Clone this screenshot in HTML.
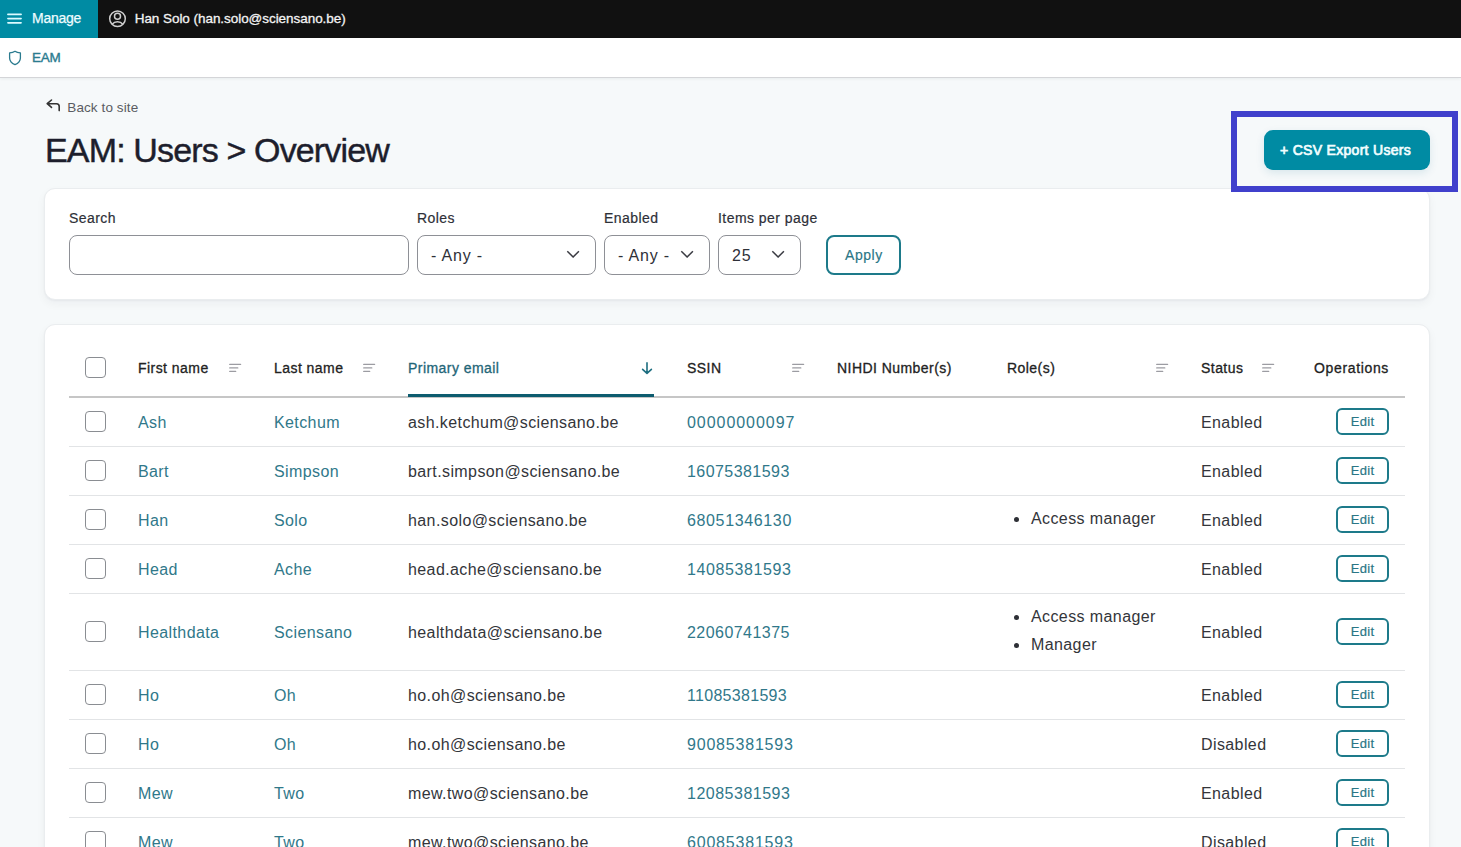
<!DOCTYPE html>
<html><head><meta charset="utf-8">
<style>
*{box-sizing:border-box;margin:0;padding:0}
html,body{width:1461px;height:847px;overflow:hidden}
body{background:#f6f9fa;font-family:"Liberation Sans",sans-serif;color:#232429;position:relative}
.abs{position:absolute;white-space:nowrap}
#topbar{position:absolute;left:0;top:0;width:1461px;height:38px;background:#111111}
#manage{position:absolute;left:0;top:0;width:98px;height:38px;background:#008ba3}
#subbar{position:absolute;left:0;top:38px;width:1461px;height:40px;background:#fff;border-bottom:1px solid #d4d5d8;box-shadow:0 1px 3px rgba(20,30,40,0.06)}
.card{position:absolute;left:44px;width:1386px;background:#fff;border:1px solid #eaedef;border-radius:11px;box-shadow:0 4px 10px rgba(20,30,40,0.045),0 1px 2px rgba(20,30,40,0.04)}
.lbl{font-size:14px;color:#2e3038;letter-spacing:0.45px;-webkit-text-stroke:0.2px #2e3038}
.sel{position:absolute;top:235px;height:40px;border:1px solid #8e9096;border-radius:8px;background:#fff}
.sel span{position:absolute;font-size:16px;color:#2e3038;letter-spacing:0.8px;top:11px;line-height:18px}
.chev{position:absolute;top:13px}
.th{position:absolute;font-size:14px;color:#222;white-space:nowrap;letter-spacing:0.45px;-webkit-text-stroke:0.3px currentColor}
.cb{position:absolute;width:21px;height:21px;border:1px solid #8a8d92;border-radius:4px;background:#fff}
.td{position:absolute;font-size:16px;white-space:nowrap;letter-spacing:0.4px;color:#33353a}
.lnk{color:#30788a}
.rowline{position:absolute;left:69px;width:1336px;height:1px;background:#e2e4e6}
.edit{position:absolute;left:1336px;width:53px;height:27px;border:2px solid #1d7a8a;border-radius:6px;color:#2a7686;font-size:13px;text-align:center;line-height:23px;letter-spacing:0.3px;-webkit-text-stroke:0.2px #2a7686}
.sorti{position:absolute}
</style></head>
<body>
<div id="topbar"></div>
<div id="manage"></div>
<!-- hamburger -->
<svg class="abs" style="left:6px;top:12px" width="18" height="13" viewBox="0 0 18 13"><path d="M1.9 2.4H15.1M1.9 6.55H15.1M1.9 10.85H15.1" stroke="#dcfbff" stroke-width="1.65" stroke-linecap="round"/></svg>
<div class="abs" style="left:32px;top:10px;font-size:14px;color:#eefcff;line-height:17px;letter-spacing:-0.25px;-webkit-text-stroke:0.25px #eefcff">Manage</div>
<!-- user icon -->
<svg class="abs" style="left:108px;top:9px" width="19" height="19" viewBox="0 0 19 19"><circle cx="9.5" cy="9.7" r="7.8" fill="none" stroke="#cfcfcf" stroke-width="1.5"/><circle cx="9.5" cy="7.3" r="3" fill="none" stroke="#cfcfcf" stroke-width="1.5"/><path d="M4.2 15.3C5.5 13.6 7.3 12.8 9.5 12.8S13.5 13.6 14.8 15.3" fill="none" stroke="#cfcfcf" stroke-width="1.5"/></svg>
<div class="abs" style="left:134.7px;top:9.6px;font-size:13.5px;color:#f3f3f3;line-height:17px;letter-spacing:-0.05px;-webkit-text-stroke:0.3px #f3f3f3">Han Solo (han.solo@sciensano.be)</div>

<div id="subbar"></div>
<svg class="abs" style="left:8px;top:50px" width="14" height="16" viewBox="0 0 14 16"><path d="M7 1.3C5.6 2.3 3.6 2.8 1.6 2.9V8C1.6 11.2 4 13.4 7 14.7C10 13.4 12.4 11.2 12.4 8V2.9C10.4 2.8 8.4 2.3 7 1.3Z" fill="none" stroke="#2b7b8f" stroke-width="1.3" stroke-linejoin="round"/></svg>
<div class="abs" style="left:32px;top:48.5px;font-size:13.5px;color:#2b7b8f;line-height:17px;letter-spacing:-0.2px;-webkit-text-stroke:0.35px #2b7b8f">EAM</div>

<!-- back to site -->
<svg class="abs" style="left:44.5px;top:98px" width="16" height="15" viewBox="0 0 16 15"><path d="M6.5 2L2.2 5.7L6.5 9.4M2.5 5.7H11.5Q14.2 5.7 14.2 8.4V12.6" fill="none" stroke="#333" stroke-width="1.6" stroke-linecap="round" stroke-linejoin="round"/></svg>
<div class="abs" style="left:67.3px;top:100px;font-size:13.5px;color:#5a5c62;line-height:16px;letter-spacing:0.1px">Back to site</div>

<div class="abs" style="left:45px;top:130px;font-size:34px;color:#1d1e2c;line-height:40px;letter-spacing:-0.85px;-webkit-text-stroke:0.45px #1d1e2c">EAM: Users &gt; Overview</div>

<!-- highlight box + button -->
<div class="abs" style="left:1231px;top:111px;width:227px;height:81px;border:6px solid #4040cc;z-index:5"></div>
<div class="abs" style="left:1264px;top:130px;width:166px;height:40px;background:#008ba3;border-radius:9px;box-shadow:0 3px 8px rgba(0,100,130,0.12)"></div>
<div class="abs" style="left:1280px;top:142px;font-size:14px;color:#f2feff;line-height:16px;letter-spacing:0.3px;-webkit-text-stroke:0.7px #f2feff">+ CSV Export Users</div>

<!-- filter card -->
<div class="card" style="top:188px;height:112px"></div>
<div class="abs lbl" style="left:69px;top:210px;line-height:16px">Search</div>
<div class="abs lbl" style="left:417px;top:210px;line-height:16px">Roles</div>
<div class="abs lbl" style="left:604px;top:210px;line-height:16px">Enabled</div>
<div class="abs lbl" style="left:718px;top:210px;line-height:16px">Items per page</div>
<div class="sel" style="left:69px;width:340px"></div>
<div class="sel" style="left:417px;width:179px"><span style="left:13px">- Any -</span><svg class="chev" style="left:148px" width="15" height="9" viewBox="0 0 15 9"><path d="M1.3 2.2L7.1 8L12.9 2.2" fill="none" stroke="#3a3b42" stroke-width="1.5"/></svg></div>
<div class="sel" style="left:604px;width:106px"><span style="left:13px">- Any -</span><svg class="chev" style="left:75px" width="15" height="9" viewBox="0 0 15 9"><path d="M1.3 2.2L7.1 8L12.9 2.2" fill="none" stroke="#3a3b42" stroke-width="1.5"/></svg></div>
<div class="sel" style="left:718px;width:83px"><span style="left:13px">25</span><svg class="chev" style="left:52px" width="15" height="9" viewBox="0 0 15 9"><path d="M1.3 2.2L7.1 8L12.9 2.2" fill="none" stroke="#3a3b42" stroke-width="1.5"/></svg></div>
<div class="abs" style="left:826px;top:235px;width:75px;height:40px;border:2px solid #1d7a8a;border-radius:8px;background:#fff"></div>
<div class="abs" style="left:845px;top:247px;font-size:14px;color:#2a7686;line-height:16px;letter-spacing:0.55px;-webkit-text-stroke:0.15px #2a7686">Apply</div>

<!-- table card -->
<div class="card" style="top:324px;height:560px"></div>
<div id="table"><div class="cb" style="left:85px;top:357px"></div>
<div class="th" style="left:138px;top:360px;line-height:16px">First name</div>
<div class="th" style="left:274px;top:360px;line-height:16px">Last name</div>
<div class="th" style="left:408px;top:360px;line-height:16px;color:#1f6678">Primary email</div>
<div class="th" style="left:687px;top:360px;line-height:16px">SSIN</div>
<div class="th" style="left:837px;top:360px;line-height:16px">NIHDI Number(s)</div>
<div class="th" style="left:1007px;top:360px;line-height:16px">Role(s)</div>
<div class="th" style="left:1201px;top:360px;line-height:16px">Status</div>
<div class="th" style="left:1314px;top:360px;line-height:16px;letter-spacing:0.65px">Operations</div>
<svg class="sorti" style="left:229px;top:363px" width="14" height="10" viewBox="0 0 14 10"><path d="M0.7 1.4H11.6M0.7 4.95H8.8M0.7 8.45H6.7" stroke="#9c9ca2" stroke-width="1.25" stroke-linecap="round"/></svg>
<svg class="sorti" style="left:363px;top:363px" width="14" height="10" viewBox="0 0 14 10"><path d="M0.7 1.4H11.6M0.7 4.95H8.8M0.7 8.45H6.7" stroke="#9c9ca2" stroke-width="1.25" stroke-linecap="round"/></svg>
<svg class="sorti" style="left:792px;top:363px" width="14" height="10" viewBox="0 0 14 10"><path d="M0.7 1.4H11.6M0.7 4.95H8.8M0.7 8.45H6.7" stroke="#9c9ca2" stroke-width="1.25" stroke-linecap="round"/></svg>
<svg class="sorti" style="left:1156px;top:363px" width="14" height="10" viewBox="0 0 14 10"><path d="M0.7 1.4H11.6M0.7 4.95H8.8M0.7 8.45H6.7" stroke="#9c9ca2" stroke-width="1.25" stroke-linecap="round"/></svg>
<svg class="sorti" style="left:1262px;top:363px" width="14" height="10" viewBox="0 0 14 10"><path d="M0.7 1.4H11.6M0.7 4.95H8.8M0.7 8.45H6.7" stroke="#9c9ca2" stroke-width="1.25" stroke-linecap="round"/></svg>
<svg class="sorti" style="left:640px;top:360px" width="14" height="15" viewBox="0 0 14 15"><path d="M7 2.9V13M2.6 9.3L7 13.4L11.4 9.3" fill="none" stroke="#1d6e80" stroke-width="1.6" stroke-linecap="round" stroke-linejoin="round"/></svg>
<div class="abs" style="left:69px;top:396px;width:1336px;height:2px;background:#c6c6c6"></div>
<div class="abs" style="left:408px;top:394px;width:246px;height:3px;background:#0d5c6f"></div>
<div class="rowline" style="top:446px"></div>
<div class="cb" style="left:85px;top:411px"></div>
<div class="td lnk" style="left:138px;top:414px;line-height:18px">Ash</div>
<div class="td lnk" style="left:274px;top:414px;line-height:18px">Ketchum</div>
<div class="td" style="left:408px;top:414px;line-height:18px">ash.ketchum@sciensano.be</div>
<div class="td lnk" style="left:687px;top:414px;line-height:18px;letter-spacing:0.95px">00000000097</div>
<div class="td" style="left:1201px;top:414px;line-height:18px">Enabled</div>
<div class="edit" style="top:408px">Edit</div>
<div class="rowline" style="top:495px"></div>
<div class="cb" style="left:85px;top:460px"></div>
<div class="td lnk" style="left:138px;top:463px;line-height:18px">Bart</div>
<div class="td lnk" style="left:274px;top:463px;line-height:18px">Simpson</div>
<div class="td" style="left:408px;top:463px;line-height:18px">bart.simpson@sciensano.be</div>
<div class="td lnk" style="left:687px;top:463px;line-height:18px;letter-spacing:0.44px">16075381593</div>
<div class="td" style="left:1201px;top:463px;line-height:18px">Enabled</div>
<div class="edit" style="top:457px">Edit</div>
<div class="rowline" style="top:544px"></div>
<div class="cb" style="left:85px;top:509px"></div>
<div class="td lnk" style="left:138px;top:512px;line-height:18px">Han</div>
<div class="td lnk" style="left:274px;top:512px;line-height:18px">Solo</div>
<div class="td" style="left:408px;top:512px;line-height:18px">han.solo@sciensano.be</div>
<div class="td lnk" style="left:687px;top:512px;line-height:18px;letter-spacing:0.64px">68051346130</div>
<div class="td" style="left:1201px;top:512px;line-height:18px">Enabled</div>
<div class="edit" style="top:506px">Edit</div>
<div class="abs" style="left:1014px;top:517px;width:5px;height:5px;border-radius:50%;background:#2e3036"></div>
<div class="td" style="left:1031px;top:510px;line-height:18px">Access manager</div>
<div class="rowline" style="top:593px"></div>
<div class="cb" style="left:85px;top:558px"></div>
<div class="td lnk" style="left:138px;top:561px;line-height:18px">Head</div>
<div class="td lnk" style="left:274px;top:561px;line-height:18px">Ache</div>
<div class="td" style="left:408px;top:561px;line-height:18px">head.ache@sciensano.be</div>
<div class="td lnk" style="left:687px;top:561px;line-height:18px;letter-spacing:0.60px">14085381593</div>
<div class="td" style="left:1201px;top:561px;line-height:18px">Enabled</div>
<div class="edit" style="top:555px">Edit</div>
<div class="rowline" style="top:670px"></div>
<div class="cb" style="left:85px;top:621px"></div>
<div class="td lnk" style="left:138px;top:624px;line-height:18px">Healthdata</div>
<div class="td lnk" style="left:274px;top:624px;line-height:18px">Sciensano</div>
<div class="td" style="left:408px;top:624px;line-height:18px">healthdata@sciensano.be</div>
<div class="td lnk" style="left:687px;top:624px;line-height:18px;letter-spacing:0.45px">22060741375</div>
<div class="td" style="left:1201px;top:624px;line-height:18px">Enabled</div>
<div class="edit" style="top:618px">Edit</div>
<div class="abs" style="left:1014px;top:615px;width:5px;height:5px;border-radius:50%;background:#2e3036"></div>
<div class="td" style="left:1031px;top:608px;line-height:18px">Access manager</div>
<div class="abs" style="left:1014px;top:643px;width:5px;height:5px;border-radius:50%;background:#2e3036"></div>
<div class="td" style="left:1031px;top:636px;line-height:18px">Manager</div>
<div class="rowline" style="top:719px"></div>
<div class="cb" style="left:85px;top:684px"></div>
<div class="td lnk" style="left:138px;top:687px;line-height:18px">Ho</div>
<div class="td lnk" style="left:274px;top:687px;line-height:18px">Oh</div>
<div class="td" style="left:408px;top:687px;line-height:18px">ho.oh@sciensano.be</div>
<div class="td lnk" style="left:687px;top:687px;line-height:18px;letter-spacing:0.30px">11085381593</div>
<div class="td" style="left:1201px;top:687px;line-height:18px">Enabled</div>
<div class="edit" style="top:681px">Edit</div>
<div class="rowline" style="top:768px"></div>
<div class="cb" style="left:85px;top:733px"></div>
<div class="td lnk" style="left:138px;top:736px;line-height:18px">Ho</div>
<div class="td lnk" style="left:274px;top:736px;line-height:18px">Oh</div>
<div class="td" style="left:408px;top:736px;line-height:18px">ho.oh@sciensano.be</div>
<div class="td lnk" style="left:687px;top:736px;line-height:18px;letter-spacing:0.80px">90085381593</div>
<div class="td" style="left:1201px;top:736px;line-height:18px">Disabled</div>
<div class="edit" style="top:730px">Edit</div>
<div class="rowline" style="top:817px"></div>
<div class="cb" style="left:85px;top:782px"></div>
<div class="td lnk" style="left:138px;top:785px;line-height:18px">Mew</div>
<div class="td lnk" style="left:274px;top:785px;line-height:18px">Two</div>
<div class="td" style="left:408px;top:785px;line-height:18px">mew.two@sciensano.be</div>
<div class="td lnk" style="left:687px;top:785px;line-height:18px;letter-spacing:0.50px">12085381593</div>
<div class="td" style="left:1201px;top:785px;line-height:18px">Enabled</div>
<div class="edit" style="top:779px">Edit</div>
<div class="cb" style="left:85px;top:831px"></div>
<div class="td lnk" style="left:138px;top:834px;line-height:18px">Mew</div>
<div class="td lnk" style="left:274px;top:834px;line-height:18px">Two</div>
<div class="td" style="left:408px;top:834px;line-height:18px">mew.two@sciensano.be</div>
<div class="td lnk" style="left:687px;top:834px;line-height:18px;letter-spacing:0.80px">60085381593</div>
<div class="td" style="left:1201px;top:834px;line-height:18px">Disabled</div>
<div class="edit" style="top:828px">Edit</div></div><!--/table-->
</body></html>
